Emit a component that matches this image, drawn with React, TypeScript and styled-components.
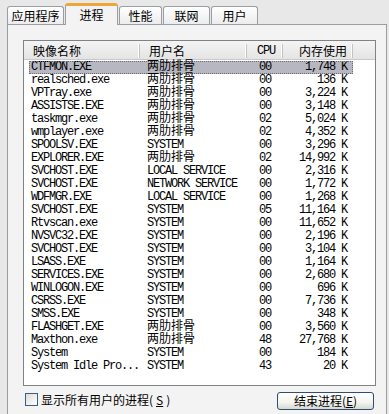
import React from "react";
import styled, { createGlobalStyle } from "styled-components";

const GlobalStyle = createGlobalStyle`
  html, body {
    margin: 0;
    padding: 0;
    background: #e8e8e8;
  }
`;

const MONO = `"Liberation Mono", "Noto Sans CJK SC", monospace`;
const CJK = `"Noto Sans CJK SC", "Liberation Sans", sans-serif`;

const Window = styled.div`
  width: 389px;
  height: 414px;
  overflow: hidden;
  background: #e8e8e8;
  display: flex;
  flex-direction: column;
  font-family: ${CJK};
  font-size: 12px;
  color: #000;
`;

const TabStrip = styled.div`
  display: flex;
  align-items: flex-end;
  gap: 1px;
  height: 24px;
  padding-left: 7px;
  position: relative;
  z-index: 1;
`;

const Tab = styled.div<{ $w: number; $active?: boolean }>`
  box-sizing: border-box;
  width: ${(p) => p.$w}px;
  height: ${(p) => (p.$active ? 22 : 18)}px;
  margin-bottom: ${(p) => (p.$active ? -1 : 0)}px;
  border: 1px solid #9a9ea3;
  border-bottom: none;
  border-top: ${(p) => (p.$active ? "3px solid #f0a637" : "1px solid #9a9ea3")};
  border-radius: 3px 3px 0 0;
  background: ${(p) =>
    p.$active ? "#f3f3f3" : "linear-gradient(#ffffff, #ececec)"};
  display: flex;
  align-items: center;
  justify-content: center;
  padding-bottom: ${(p) => (p.$active ? 2 : 0)}px;
  font-family: ${CJK};
  font-size: 12px;
  line-height: 14px;
`;

const Page = styled.div`
  flex: 1;
  margin: 0 2px 0 7px;
  border: 1px solid #9a9ea3;
  border-bottom: none;
  background: #f3f3f3;
  padding: 15px 11px 0 15px;
  display: flex;
  flex-direction: column;
`;

const ListBox = styled.div`
  box-sizing: border-box;
  width: 353px;
  height: 346px;
  border: 1px solid #7f8388;
  background: #fff;
  overflow: hidden;
`;

const Header = styled.div`
  display: grid;
  grid-template-columns: 116px 107px 36px 70px 1fr;
  height: 18px;
  background: linear-gradient(#f4f4f4, #e4e4e4);
  border-bottom: 1px solid #c9c9c9;
  margin-bottom: 1px;
`;

const HeadCell = styled.div<{ $align?: "left" | "right"; $pad: number; $last?: boolean }>`
  display: flex;
  align-items: center;
  justify-content: ${(p) => (p.$align === "right" ? "flex-end" : "flex-start")};
  padding: ${(p) => (p.$align === "right" ? `0 ${p.$pad}px 0 0` : `0 0 0 ${p.$pad}px`)};
  font-family: ${CJK};
  font-size: 12px;
  line-height: 14px;
  white-space: nowrap;
  border-right: ${(p) => (p.$last ? "none" : "1px solid #c3c3c3")};
  box-shadow: ${(p) => (p.$last ? "none" : "inset -1px 0 0 #ffffff")};
  margin: 3px 0;
`;

const MonoText = styled.span`
  font-family: ${MONO};
  font-size: 12px;
  letter-spacing: -1.2px;
`;

const Row = styled.div<{ $selected?: boolean }>`
  box-sizing: border-box;
  display: grid;
  grid-template-columns: 111px 107px 36px 70px;
  width: 324px;
  height: 13px;
  margin-left: 5px;
  background: ${(p) => (p.$selected ? "#b7b7c1" : "transparent")};
  outline: ${(p) => (p.$selected ? "1px dotted #6a6a70" : "none")};
  outline-offset: -1px;
`;

const Cell = styled.div<{ $align?: "left" | "right"; $pad: number }>`
  height: 13px;
  display: flex;
  align-items: center;
  justify-content: ${(p) => (p.$align === "right" ? "flex-end" : "flex-start")};
  padding: ${(p) => (p.$align === "right" ? `0 ${p.$pad}px 0 0` : `0 0 0 ${p.$pad}px`)};
  font-family: ${MONO};
  font-size: 12px;
  letter-spacing: -1.2px;
  line-height: 13px;
  white-space: nowrap;
`;

const CjkText = styled.span`
  font-family: ${CJK};
  font-size: 12px;
  letter-spacing: 0;
  line-height: 13px;
  transform: translateY(-3px);
`;

const Footer = styled.div`
  width: 353px;
  box-sizing: border-box;
  display: flex;
  justify-content: space-between;
  align-items: flex-start;
  padding: 0 2px;
  margin-top: 6px;
`;

const CheckLabel = styled.label`
  display: flex;
  align-items: center;
  gap: 3px;
  height: 13px;
  font-family: ${CJK};
  font-size: 12px;
  margin-top: 1px;
`;

const CheckBox = styled.span`
  box-sizing: border-box;
  width: 13px;
  height: 13px;
  border: 1px solid #3b5e88;
  background: linear-gradient(135deg, #dcdcd7, #ffffff);
`;

const Underline = styled.span`
  text-decoration: underline;
`;

const Button = styled.button`
  box-sizing: border-box;
  width: 97px;
  height: 18px;
  padding: 0;
  border: 1px solid #2f4f72;
  border-radius: 3px;
  background: linear-gradient(#ffffff, #f3f3ef 60%, #d8d8d2);
  font-family: ${CJK};
  font-size: 12px;
  line-height: 14px;
  color: #000;
  display: flex;
  align-items: center;
  justify-content: center;
`;

type Proc = { name: string; user: string; cpu: string; mem: string };

const ME = "两肋排骨";

const processes: Proc[] = [
  { name: "CTFMON.EXE", user: ME, cpu: "00", mem: "1,748 K" },
  { name: "realsched.exe", user: ME, cpu: "00", mem: "136 K" },
  { name: "VPTray.exe", user: ME, cpu: "00", mem: "3,224 K" },
  { name: "ASSISTSE.EXE", user: ME, cpu: "00", mem: "3,148 K" },
  { name: "taskmgr.exe", user: ME, cpu: "02", mem: "5,024 K" },
  { name: "wmplayer.exe", user: ME, cpu: "02", mem: "4,352 K" },
  { name: "SPOOLSV.EXE", user: "SYSTEM", cpu: "00", mem: "3,296 K" },
  { name: "EXPLORER.EXE", user: ME, cpu: "02", mem: "14,992 K" },
  { name: "SVCHOST.EXE", user: "LOCAL SERVICE", cpu: "00", mem: "2,316 K" },
  { name: "SVCHOST.EXE", user: "NETWORK SERVICE", cpu: "00", mem: "1,772 K" },
  { name: "WDFMGR.EXE", user: "LOCAL SERVICE", cpu: "00", mem: "1,268 K" },
  { name: "SVCHOST.EXE", user: "SYSTEM", cpu: "05", mem: "11,164 K" },
  { name: "Rtvscan.exe", user: "SYSTEM", cpu: "00", mem: "11,652 K" },
  { name: "NVSVC32.EXE", user: "SYSTEM", cpu: "00", mem: "2,196 K" },
  { name: "SVCHOST.EXE", user: "SYSTEM", cpu: "00", mem: "3,104 K" },
  { name: "LSASS.EXE", user: "SYSTEM", cpu: "00", mem: "1,164 K" },
  { name: "SERVICES.EXE", user: "SYSTEM", cpu: "00", mem: "2,680 K" },
  { name: "WINLOGON.EXE", user: "SYSTEM", cpu: "00", mem: "696 K" },
  { name: "CSRSS.EXE", user: "SYSTEM", cpu: "00", mem: "7,736 K" },
  { name: "SMSS.EXE", user: "SYSTEM", cpu: "00", mem: "348 K" },
  { name: "FLASHGET.EXE", user: ME, cpu: "00", mem: "3,560 K" },
  { name: "Maxthon.exe", user: ME, cpu: "48", mem: "27,768 K" },
  { name: "System", user: "SYSTEM", cpu: "00", mem: "184 K" },
  { name: "System Idle Pro...", user: "SYSTEM", cpu: "43", mem: "20 K" },
];

const tabs = [
  { label: "应用程序", w: 57 },
  { label: "进程", w: 53, active: true },
  { label: "性能", w: 43 },
  { label: "联网", w: 47 },
  { label: "用户", w: 47 },
];

export default function App() {
  return (
    <>
      <GlobalStyle />
      <Window>
        <TabStrip>
          {tabs.map((t) => (
            <Tab key={t.label} $w={t.w} $active={t.active}>
              {t.label}
            </Tab>
          ))}
        </TabStrip>
        <Page>
          <ListBox>
            <Header>
              <HeadCell $pad={9}>映像名称</HeadCell>
              <HeadCell $pad={9}>用户名</HeadCell>
              <HeadCell $pad={10}>
                <MonoText>CPU</MonoText>
              </HeadCell>
              <HeadCell $pad={5} $align="right">内存使用</HeadCell>
              <HeadCell $pad={0} $last />
            </Header>
            {processes.map((p, i) => (
              <Row key={i} $selected={i === 0}>
                <Cell $pad={2}>{p.name}</Cell>
                <Cell $pad={7}>
                  {p.user === ME ? <CjkText>{p.user}</CjkText> : p.user}
                </Cell>
                <Cell $pad={12}>{p.cpu}</Cell>
                <Cell $pad={6} $align="right">
                  {p.mem}
                </Cell>
              </Row>
            ))}
          </ListBox>
          <Footer>
            <CheckLabel>
              <CheckBox />
              显示所有用户的进程(<Underline>S</Underline>)
            </CheckLabel>
            <Button>
              结束进程(<Underline>E</Underline>)
            </Button>
          </Footer>
        </Page>
      </Window>
    </>
  );
}
